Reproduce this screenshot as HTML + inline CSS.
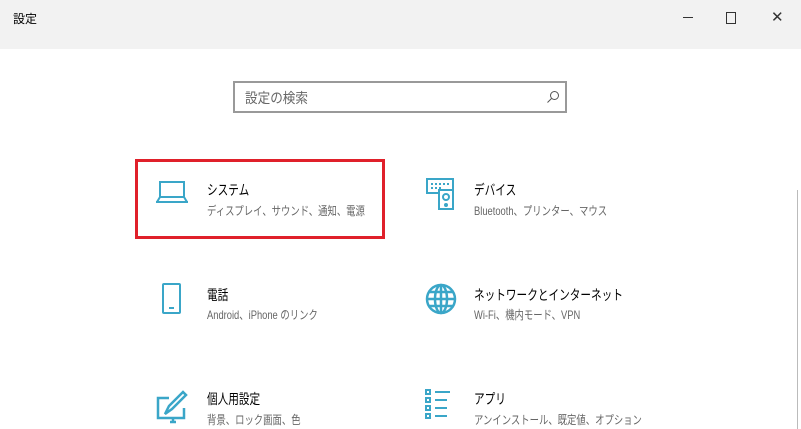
<!DOCTYPE html>
<html><head><meta charset="utf-8"><style>
body{margin:0;width:801px;height:429px;overflow:hidden;background:#fff;font-family:"Liberation Sans","Noto Sans CJK JP",sans-serif;position:relative}
.tb{position:absolute;left:0;top:0;width:801px;height:49px;background:#f2f2f2}
.t{position:absolute;font-size:12px;color:#000}
.s{position:absolute;left:233px;top:81px;width:330px;height:28px;border:2px solid #999;background:#fff}
.ti{position:absolute;font-size:14px;color:#000;white-space:nowrap;transform:scaleX(0.76);transform-origin:0 0}
.su{position:absolute;font-size:12px;color:#666;white-space:nowrap;transform:scaleX(0.78);transform-origin:0 0}
svg{position:absolute}
</style></head><body>
<div class="tb"></div>
<div class="t" style="left:13px;top:10px">設定</div>
<div style="position:absolute;left:683px;top:17px;width:10px;height:1px;background:#333"></div>
<div style="position:absolute;left:726px;top:12px;width:8px;height:10px;border:1px solid #333"></div>
<div class="t" style="left:771px;top:8px;font-size:15px;color:#333">✕</div>
<div style="position:absolute;left:797px;top:190px;width:1px;height:239px;background:#bbb"></div>
<div class="s"><span style="position:absolute;left:10px;top:5px;font-size:14px;color:#666;transform:scaleX(0.9);transform-origin:0 0;white-space:nowrap">設定の検索</span>
<svg style="left:311px;top:7px" width="14" height="14" viewBox="0 0 14 14"><circle cx="8.5" cy="5.5" r="4" fill="none" stroke="#555"/><path d="M5.5 8.5L1.5 12.5" stroke="#555"/></svg></div>
<div style="position:absolute;left:135px;top:159px;width:244px;height:74px;border:3px solid #e0202a"></div>
<svg style="left:155px;top:180px" width="34" height="26" viewBox="0 0 34 26" fill="none" stroke="#3aa6c8" stroke-width="2"><rect x="5" y="2" width="24" height="15"/><path d="M1 22H33M5 17L2 22M29 17L32 22"/></svg>
<div class="ti" style="left:207px;top:180px">システム</div>
<div class="su" style="left:207px;top:202px">ディスプレイ、サウンド、通知、電源</div>
<svg style="left:425px;top:177px" width="34" height="34" viewBox="0 0 34 34" fill="none" stroke="#3aa6c8" stroke-width="2"><rect x="2" y="2" width="26" height="14"/><path d="M6 7h18M6 11h10" stroke-dasharray="2 2"/><rect x="14" y="13" width="14" height="19" fill="#fff"/><circle cx="21" cy="20" r="3"/><circle cx="21" cy="28" r="1"/></svg>
<div class="ti" style="left:474px;top:180px">デバイス</div>
<div class="su" style="left:474px;top:202px">Bluetooth、プリンター、マウス</div>
<svg style="left:160px;top:282px" width="24" height="34" viewBox="0 0 24 34" fill="none" stroke="#3aa6c8" stroke-width="2"><rect x="3" y="2" width="17" height="29" rx="1"/><path d="M9 26h5"/></svg>
<div class="ti" style="left:207px;top:285px">電話</div>
<div class="su" style="left:207px;top:306px">Android、iPhone のリンク</div>
<svg style="left:424px;top:282px" width="34" height="34" viewBox="0 0 34 34" fill="none" stroke="#3aa6c8" stroke-width="2.5"><circle cx="17" cy="17" r="14"/><ellipse cx="17" cy="17" rx="6" ry="14"/><path d="M3 17h28M5 10h24M5 24h24M17 3v28"/></svg>
<div class="ti" style="left:474px;top:285px">ネットワークとインターネット</div>
<div class="su" style="left:474px;top:306px">Wi-Fi、機内モード、VPN</div>
<svg style="left:155px;top:390px" width="34" height="34" viewBox="0 0 34 34" fill="none" stroke="#3aa6c8" stroke-width="2.5"><path d="M14 8H3v20h26V18"/><path d="M15 32h6M18 28v4"/><path d="M10 24l4-8 14-14 3 3-14 14z"/></svg>
<div class="ti" style="left:207px;top:389px">個人用設定</div>
<div class="su" style="left:207px;top:411px">背景、ロック画面、色</div>
<svg style="left:424px;top:388px" width="34" height="34" viewBox="0 0 34 34" fill="none" stroke="#3aa6c8" stroke-width="2"><rect x="2" y="2" width="4" height="4"/><rect x="2" y="10" width="4" height="4"/><rect x="2" y="18" width="4" height="4"/><rect x="2" y="26" width="4" height="4"/><path d="M11 4h15M11 12h12M11 20h12M11 28h12"/></svg>
<div class="ti" style="left:474px;top:389px">アプリ</div>
<div class="su" style="left:474px;top:411px">アンインストール、既定値、オプション</div>
</body></html>
